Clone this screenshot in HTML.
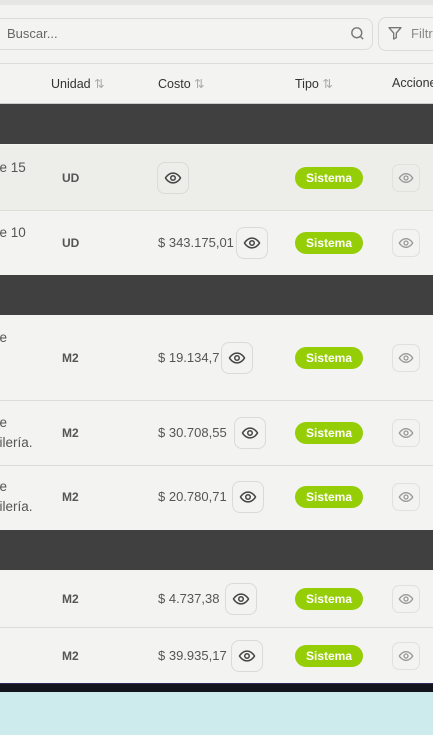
<!DOCTYPE html>
<html><head><meta charset="utf-8"><style>
*{margin:0;padding:0;box-sizing:border-box}
body{width:433px;height:735px;overflow:hidden;background:#f3f3f1;font-family:"Liberation Sans",sans-serif;position:relative}
.a{position:absolute}
.hd{font-size:12.5px;color:#333;top:76px}
.bar{left:0;width:433px;height:40px;background:#404040}
.line{left:0;width:433px;height:1px;background:#dcdcd9}
.t{font-size:13px;color:#555;line-height:18px}
.l{font-size:13.5px;color:#555;line-height:20px}
.u{font-size:12px;font-weight:700;color:#555;left:62px}
.eb{width:32px;height:32px;border:1px solid #dadad7;border-radius:8px;display:flex;align-items:center;justify-content:center}
.ab{width:28px;height:28px;border:1px solid #e0e0dd;border-radius:7px;display:flex;align-items:center;justify-content:center;left:392px}
.bd{left:295px;width:68px;height:22px;border-radius:11px;background:#95cd06;color:#fff;font-size:12px;font-weight:700;text-align:center;line-height:22px}
</style></head><body>
<div class="a" style="left:0;top:0;width:433px;height:5px;background:#e6e6e4"></div>
<div class="a" style="left:-10px;top:18px;width:383px;height:32px;border:1px solid #dcdcd9;border-radius:8px"></div>
<div class="a" style="left:7px;top:26px;font-size:13px;color:#666">Buscar...</div>
<svg class="a" style="left:349px;top:25px" width="17" height="17" viewBox="0 0 24 24" fill="none" stroke="#777" stroke-width="2"><circle cx="11" cy="11" r="7"/><path d="M20 20l-4-4"/></svg>
<div class="a" style="left:378px;top:17px;width:80px;height:34px;border:1px solid #dcdcd9;border-radius:8px"></div>
<svg class="a" style="left:387px;top:25px" width="16" height="16" viewBox="0 0 24 24" fill="none" stroke="#777" stroke-width="2" stroke-linejoin="round"><path d="M3 4h18l-7 8v7l-4 2v-9z"/></svg>
<div class="a" style="left:411px;top:26px;font-size:13px;color:#888">Filtros</div>
<div class="a line" style="top:63px"></div>
<div class="a hd" style="left:51px">Unidad <span style="color:#aaa">⇅</span></div>
<div class="a hd" style="left:158px">Costo <span style="color:#aaa">⇅</span></div>
<div class="a hd" style="left:295px">Tipo <span style="color:#aaa">⇅</span></div>
<div class="a hd" style="left:392px">Acciones</div>
<div class="a line" style="top:103px;background:#ccc"></div>
<div class="a bar" style="top:104px"></div>
<div class="a" style="left:0;top:145px;width:433px;height:65px;background:#ededea"></div>
<div class="a line" style="top:210px"></div>
<div class="a bar" style="top:275px"></div>
<div class="a line" style="top:400px"></div>
<div class="a line" style="top:465px"></div>
<div class="a bar" style="top:530px"></div>
<div class="a line" style="top:627px"></div>
<div class="a" style="left:0;top:683px;width:433px;height:9px;background:#13131c;border-top:1px solid #302a5a"></div>
<div class="a" style="left:0;top:692px;width:433px;height:43px;background:#cdebed"></div>

<div class="a l" style="left:-8px;top:158px">de 15</div>
<div class="a l" style="left:-8px;top:223px">de 10</div>
<div class="a l" style="left:-8px;top:328px">de</div>
<div class="a l" style="left:-8px;top:413px">de<br>pilería.</div>
<div class="a l" style="left:-8px;top:477px">de<br>pilería.</div>

<div class="a u" style="top:171px">UD</div>
<div class="a u" style="top:236px">UD</div>
<div class="a u" style="top:351px">M2</div>
<div class="a u" style="top:426px">M2</div>
<div class="a u" style="top:490px">M2</div>
<div class="a u" style="top:592px">M2</div>
<div class="a u" style="top:649px">M2</div>

<div class="a t" style="left:158px;top:234px">$ 343.175,01</div>
<div class="a t" style="left:158px;top:349px">$ 19.134,7</div>
<div class="a t" style="left:158px;top:424px">$ 30.708,55</div>
<div class="a t" style="left:158px;top:488px">$ 20.780,71</div>
<div class="a t" style="left:158px;top:590px">$ 4.737,38</div>
<div class="a t" style="left:158px;top:647px">$ 39.935,17</div>

<svg width="0" height="0" style="position:absolute"><defs><symbol id="eye" viewBox="0 0 24 24"><path d="M2 12s3.5-6.5 10-6.5S22 12 22 12s-3.5 6.5-10 6.5S2 12 2 12z" fill="none" stroke="currentColor" stroke-width="2"/><circle cx="12" cy="12" r="3" fill="none" stroke="currentColor" stroke-width="2"/></symbol></defs></svg>

<div class="a eb" style="left:157px;top:162px;color:#444"><svg width="18" height="18"><use href="#eye"/></svg></div>
<div class="a eb" style="left:236px;top:227px;color:#444"><svg width="18" height="18"><use href="#eye"/></svg></div>
<div class="a eb" style="left:221px;top:342px;color:#444"><svg width="18" height="18"><use href="#eye"/></svg></div>
<div class="a eb" style="left:234px;top:417px;color:#444"><svg width="18" height="18"><use href="#eye"/></svg></div>
<div class="a eb" style="left:232px;top:481px;color:#444"><svg width="18" height="18"><use href="#eye"/></svg></div>
<div class="a eb" style="left:225px;top:583px;color:#444"><svg width="18" height="18"><use href="#eye"/></svg></div>
<div class="a eb" style="left:231px;top:640px;color:#444"><svg width="18" height="18"><use href="#eye"/></svg></div>

<div class="a bd" style="top:167px">Sistema</div>
<div class="a bd" style="top:232px">Sistema</div>
<div class="a bd" style="top:347px">Sistema</div>
<div class="a bd" style="top:422px">Sistema</div>
<div class="a bd" style="top:486px">Sistema</div>
<div class="a bd" style="top:588px">Sistema</div>
<div class="a bd" style="top:645px">Sistema</div>

<div class="a ab" style="top:164px;color:#999"><svg width="16" height="16"><use href="#eye"/></svg></div>
<div class="a ab" style="top:229px;color:#999"><svg width="16" height="16"><use href="#eye"/></svg></div>
<div class="a ab" style="top:344px;color:#999"><svg width="16" height="16"><use href="#eye"/></svg></div>
<div class="a ab" style="top:419px;color:#999"><svg width="16" height="16"><use href="#eye"/></svg></div>
<div class="a ab" style="top:483px;color:#999"><svg width="16" height="16"><use href="#eye"/></svg></div>
<div class="a ab" style="top:585px;color:#999"><svg width="16" height="16"><use href="#eye"/></svg></div>
<div class="a ab" style="top:642px;color:#999"><svg width="16" height="16"><use href="#eye"/></svg></div>
</body></html>
